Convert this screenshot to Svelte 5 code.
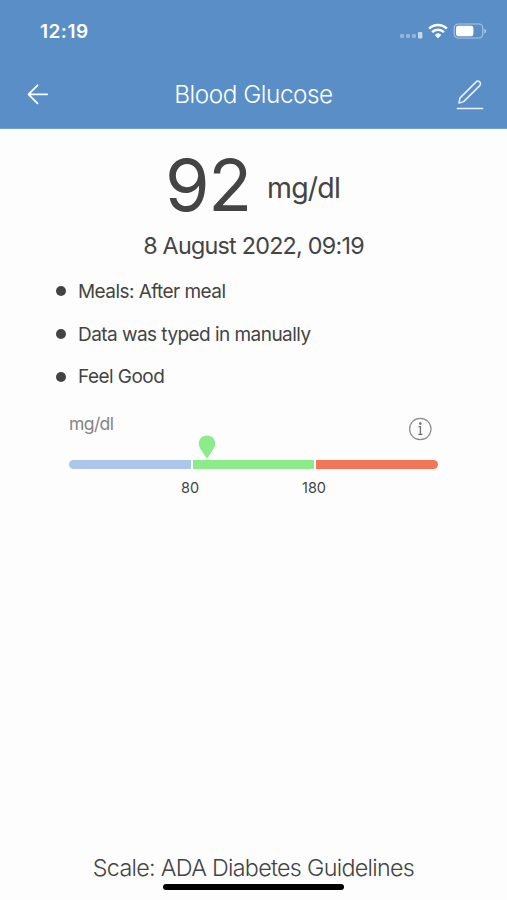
<script>
  const notes = ['Meals: After meal', 'Data was typed in manually', 'Feel Good'];
</script>

<div class="screen">
  <header>
    <div class="status">
      <span class="time">12:19</span>
      <svg class="indicators" width="90" height="20" viewBox="0 0 90 20">
        <g fill="#fff">
          <g opacity=".35">
            <rect x="2" y="13" width="4" height="4" rx="1" />
            <rect x="8" y="13" width="4" height="4" rx="1" />
            <rect x="14" y="13" width="4" height="4" rx="1" />
          </g>
          <rect x="20" y="11" width="4.4" height="6.5" rx="1" opacity=".65" />
        </g>
        <g transform="translate(2 1)">
          <path d="M38 16l-2.9-3a4.1 4.1 0 0 1 5.8 0z" fill="#fff" stroke="#fff" stroke-width=".6" stroke-linejoin="round" />
          <g fill="none" stroke="#fff" stroke-width="2.5">
            <path d="M32.1 10.1a8.4 8.4 0 0 1 11.8 0" />
            <path d="M29.2 6.6a12.7 12.7 0 0 1 17.6 0" />
          </g>
          <rect x="54.2" y="2" width="28.6" height="14" rx="4" fill="none" stroke="#fff" stroke-width="1.1" opacity=".5" />
          <rect x="56" y="3.7" width="17.4" height="10.6" rx="2.2" fill="#fff" />
          <path d="M84.3 6.8q2 .7 2 2.3t-2 2.3z" fill="#fff" opacity=".5" />
        </g>
      </svg>
    </div>
    <nav>
      <svg width="24" height="24" viewBox="0 0 24 24" fill="none" stroke="#fff" stroke-width="1.8" stroke-linecap="round" stroke-linejoin="round">
        <path d="M21.2 12.3H2.5M11.5 3.3L2.5 12.3l9 9" />
      </svg>
      <h1>Blood Glucose</h1>
      <svg width="30" height="32" viewBox="0 0 30 32" fill="none" stroke="#e9f2ff" stroke-width="1.5" stroke-linecap="round" stroke-linejoin="round">
        <path d="M4 25.1l.9-5L20.9 4.1a2.6 2.6 0 0 1 3.9 3.5L8.6 23.6z" />
        <path d="M2.4 30.5h25.2" />
      </svg>
    </nav>
  </header>

  <main>
    <div class="reading"><span class="value">92</span><span class="unit">mg/dl</span></div>
    <div class="date">8 August 2022, 09:19</div>
    <ul>
      {#each notes as note}
        <li><i></i><span class="note">{note}</span></li>
      {/each}
    </ul>
    <section class="scale">
      <div class="caption">
        <span>mg/dl</span>
        <svg width="24" height="24" viewBox="0 0 24 24">
          <circle cx="12.3" cy="12" r="10.7" fill="none" stroke="#8a8a8a" stroke-width="1.2" />
          <circle cx="12.3" cy="6.6" r="1.3" fill="#707070" />
          <path d="M10.6 9.7h1.8v7.4M10.4 17.4h4" fill="none" stroke="#707070" stroke-width="1.3" />
        </svg>
      </div>
      <div class="bar">
        <span class="low"></span>
        <span class="normal"></span>
        <span class="high"></span>
        <svg class="marker" width="18" height="24" viewBox="0 0 18 24">
          <path d="M9 23.8L2.2 13.4C-1.4 7.2 2.3.5 9 .5s10.4 6.7 6.8 12.9z" fill="#8cec8b" />
        </svg>
      </div>
      <div class="ticks"><span>80</span><span>180</span></div>
    </section>
  </main>

  <footer>
    <div class="guide">Scale: ADA Diabetes Guidelines</div>
    <div class="home"></div>
  </footer>
</div>

<style>
  .screen {
    width: 507px;
    height: 900px;
    display: flex;
    flex-direction: column;
    overflow: hidden;
    background: #fdfdfd;
    color: #444;
    font-family: Inter, "Liberation Sans", sans-serif;
    font-weight: 400;
    white-space: nowrap;
  }
  svg { display: block; flex: none; }
  header {
    height: 129px;
    box-sizing: border-box;
    flex: none;
    background: #5a8ec7;
    border-bottom: 1px solid #6f9fd1;
    color: #fff;
  }
  .status {
    height: 62px;
    padding: 0 19px 0 40px;
    display: flex;
    align-items: center;
    justify-content: space-between;
  }
  .time { font-size: 19px; font-weight: 600; letter-spacing: .5px; }
  nav {
    height: 64px;
    padding: 0 22px 0 26px;
    display: flex;
    align-items: center;
    justify-content: space-between;
  }
  h1 { margin: 0 0 0 2px; font-size: 24.3px; line-height: 30px; font-weight: 300; letter-spacing: -.45px; }
  main { flex: 1; }
  .reading {
    height: 99px;
    display: flex;
    align-items: flex-start;
    padding-left: 165px;
  }
  .value { font-size: 72px; line-height: 112px; width: 102px; letter-spacing: -1.5px; }
  .unit { font-size: 28.5px; line-height: 34px; padding-top: 42px; letter-spacing: -.8px; }
  .date { font-size: 23.3px; line-height: 36px; text-align: center; letter-spacing: -.75px; }
  ul {
    list-style: none;
    margin: 6px 0 0;
    padding: 0 0 0 56px;
  }
  li { height: 42.8px; display: flex; align-items: center; }
  i { width: 10px; height: 10px; border-radius: 50%; background: #434343; margin-right: 12px; }
  .note { font-size: 19px; letter-spacing: -.55px; }
  .scale { padding: 14px 69px 0; }
  .caption {
    height: 48px;
    display: flex;
    align-items: flex-start;
    justify-content: space-between;
    padding-right: 6px;
    font-size: 17.6px;
    letter-spacing: -.65px;
    line-height: 24px;
    color: #858585;
  }
  .caption svg { margin-top: 5px; }
  .bar { position: relative; display: flex; gap: 2px; height: 9px; }
  .bar span { flex: 1; }
  .low { background: #adc7ec; border-radius: 5px 0 0 5px; }
  .normal { background: #8cec8b; }
  .high { background: #f17556; border-radius: 0 5px 5px 0; }
  .marker { position: absolute; left: 129px; top: -25px; }
  .ticks {
    display: flex;
    margin-top: 10px;
    padding-left: 59px;
    font-size: 14.5px;
    line-height: 18px;
  }
  .ticks span { width: 124px; text-align: center; }
  footer {
    height: 48px;
    flex: none;
    display: flex;
    flex-direction: column;
    align-items: center;
  }
  .guide { font-size: 23.3px; line-height: 32px; font-weight: 300; letter-spacing: -.7px; }
  .home { width: 181px; height: 6px; border-radius: 3px; background: #000; }
</style>
